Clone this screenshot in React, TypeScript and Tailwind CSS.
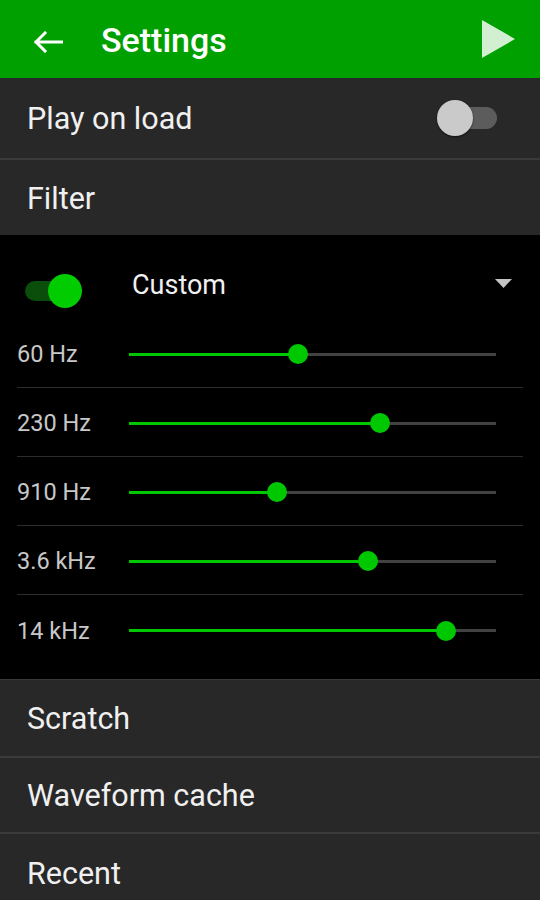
import React from 'react';

const bands = [
    { label: '60 Hz', value: 46 },
    { label: '230 Hz', value: 68.4 },
    { label: '910 Hz', value: 40.3 },
    { label: '3.6 kHz', value: 65.1 },
    { label: '14 kHz', value: 86.4 },
];

function Row({ label, height, divider = true, children }: { label: string; height: string; divider?: boolean; children?: React.ReactNode }) {
    return (
        <div className={`${height} flex items-center justify-between pl-[27px] pr-[43px] bg-[#282828] ${divider ? 'border-b-2 border-[#3a3a3a]' : ''}`}>
            <span className="text-[30.5px] text-[#f0f0f0] leading-none pt-[3px]">{label}</span>
            {children}
        </div>
    );
}

function BandSlider({ label, value, last }: { label: string; value: number; last: boolean }) {
    return (
        <div className={`flex items-center h-[69px] mx-[17px] pt-[2px] ${last ? '' : 'border-b border-[#2c2c2c]'}`}>
            <span className="w-[112px] text-[23.5px] text-[#c8c8c8] leading-none pt-[2px]">{label}</span>
            <div className="relative w-[367px] h-[20px] flex items-center">
                <div className="w-full h-[3px] bg-[#424242]" />
                <div className="absolute left-0 h-[3px] bg-[#00c800]" style={{ width: `${value}%` }} />
                <div
                    className="absolute w-[20px] h-[20px] rounded-full bg-[#00c800] -translate-x-1/2"
                    style={{ left: `${value}%` }}
                />
            </div>
        </div>
    );
}

export default function App() {
    return (
        <div className="w-[540px] h-[900px] overflow-hidden bg-[#282828] font-['Roboto',sans-serif]">
            {/* Toolbar */}
            <div className="h-[78px] bg-[#00a000] flex items-center pl-[33px] pr-[25px]">
                <svg width="30" height="22" viewBox="0 0 30 22" className="mt-[5px]">
                    <path d="M3 11 H29 M3 11 L12 2 M3 11 L12 20" stroke="white" strokeWidth="3" fill="none" strokeLinecap="square" />
                </svg>
                <h1 className="ml-[38px] text-[34px] font-medium text-white leading-none pt-[2px]">Settings</h1>
                <svg width="33" height="38" viewBox="0 0 33 38" className="ml-auto">
                    <polygon points="0,0 33,19 0,38" fill="#d2efd2" />
                </svg>
            </div>

            <Row label="Play on load" height="h-[82px]">
                <div className="relative w-[60px] h-[36px]">
                    <div className="absolute right-0 top-[7px] w-[48px] h-[22px] rounded-full bg-[#5c5c5c]" />
                    <div className="absolute left-0 top-0 w-[36px] h-[36px] rounded-full bg-[#cacaca] shadow-[0_1px_2px_rgba(0,0,0,0.6)]" />
                </div>
            </Row>
            <Row label="Filter" height="h-[75px]" divider={false} />

            {/* Equalizer */}
            <div className="bg-black h-[444px]">
                <div className="h-[84px] flex items-start pt-[33px] pl-[25px] pr-[28px]">
                    <div className="relative w-[57px] h-[34px] mt-[6px]">
                        <div className="absolute left-0 top-[7px] w-[46px] h-[20px] rounded-full bg-[#0b4d0b]" />
                        <div className="absolute right-0 top-0 w-[34px] h-[34px] rounded-full bg-[#00cc00]" />
                    </div>
                    <span className="ml-[50px] text-[27px] text-[#f0f0f0] leading-[34px]">Custom</span>
                    <svg width="17" height="9" viewBox="0 0 17 9" className="ml-auto mt-[11px]">
                        <polygon points="0,0 17,0 8.5,9" fill="#c4c4c4" />
                    </svg>
                </div>
                {bands.map((b, i) => (
                    <BandSlider key={b.label} label={b.label} value={b.value} last={i === bands.length - 1} />
                ))}
            </div>

            <div className="border-t border-[#3a3a3a]">
                <Row label="Scratch" height="h-[78px]" />
                <Row label="Waveform cache" height="h-[76px]" />
                <Row label="Recent" height="h-[78px]" divider={false} />
            </div>
        </div>
    );
}
